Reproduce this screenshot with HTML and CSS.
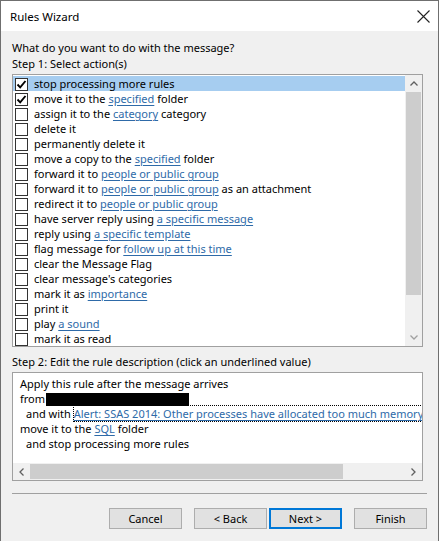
FILE: index.html
```html
<!DOCTYPE html>
<html lang="en">
  <head>
    <meta charset="UTF-8" />
    <title>Rules Wizard</title>
    <link rel="stylesheet" href="styles.css">
  </head>
  <body>
    <div class="window">
      <div class="titlebar">
        <span class="title">Rules Wizard</span>
        <svg class="close" width="13" height="13" viewBox="0 0 13 13">
          <path d="M0.5 0.5 L12.5 12.5 M12.5 0.5 L0.5 12.5" stroke="#222" stroke-width="1.1" fill="none" />
        </svg>
      </div>

      <div class="content">
        <p class="label">What do you want to do with the message?</p>
        <p class="label">Step 1: Select action(s)</p>

        <div class="action-list">
          <ul class="rows">
            <li class="selected"><span class="check on"></span>stop processing more rules</li>
            <li><span class="check on"></span>move it to the <a>specified</a> folder</li>
            <li><span class="check"></span>assign it to the <a>category</a> category</li>
            <li><span class="check"></span>delete it</li>
            <li><span class="check"></span>permanently delete it</li>
            <li><span class="check"></span>move a copy to the <a>specified</a> folder</li>
            <li><span class="check"></span>forward it to <a>people or public group</a></li>
            <li><span class="check"></span>forward it to <a>people or public group</a> as an attachment</li>
            <li><span class="check"></span>redirect it to <a>people or public group</a></li>
            <li><span class="check"></span>have server reply using <a>a specific message</a></li>
            <li><span class="check"></span>reply using <a>a specific template</a></li>
            <li><span class="check"></span>flag message for <a>follow up at this time</a></li>
            <li><span class="check"></span>clear the Message Flag</li>
            <li><span class="check"></span>clear message's categories</li>
            <li><span class="check"></span>mark it as <a>importance</a></li>
            <li><span class="check"></span>print it</li>
            <li><span class="check"></span>play <a>a sound</a></li>
            <li><span class="check"></span>mark it as read</li>
          </ul>
          <div class="vscroll">
            <div class="arrow">
              <svg width="8" height="5" viewBox="0 0 8 5"><path d="M0.5 4.5 L4 1 L7.5 4.5" stroke="#606060" stroke-width="1.3" fill="none" /></svg>
            </div>
            <div class="vthumb"></div>
            <div class="vtrack"></div>
            <div class="arrow">
              <svg width="8" height="5" viewBox="0 0 8 5"><path d="M0.5 0.5 L4 4 L7.5 0.5" stroke="#a0a0a0" stroke-width="1.3" fill="none" /></svg>
            </div>
          </div>
        </div>

        <p class="label step2">Step 2: Edit the rule description (click an underlined value)</p>

        <div class="desc-box">
          <div class="desc-text">
            <div>Apply this rule after the message arrives</div>
            <div>from<span class="redacted"></span></div>
            <div class="indent">and with <a class="focused">Alert: SSAS 2014: Other processes have allocated too much memory</a></div>
            <div>move it to the <a>SQL</a> folder</div>
            <div class="indent">and stop processing more rules</div>
          </div>
          <div class="hscroll">
            <div class="harrow">
              <svg width="5" height="8" viewBox="0 0 5 8"><path d="M4.5 0.5 L1 4 L4.5 7.5" stroke="#606060" stroke-width="1.3" fill="none" /></svg>
            </div>
            <div class="hthumb"></div>
            <div class="htrack"></div>
            <div class="harrow">
              <svg width="5" height="8" viewBox="0 0 5 8"><path d="M0.5 0.5 L4 4 L0.5 7.5" stroke="#606060" stroke-width="1.3" fill="none" /></svg>
            </div>
          </div>
        </div>

        <div class="separator"></div>

        <div class="buttons">
          <button class="cancel">Cancel</button>
          <button class="back">&lt; Back</button>
          <button class="next">Next &gt;</button>
          <button class="finish">Finish</button>
        </div>
      </div>
    </div>
  </body>
</html>
```

FILE: styles.css
```css
* {
  margin: 0;
  padding: 0;
  box-sizing: border-box;
}

body {
  font-family: "Noto Sans", "Open Sans", sans-serif;
  font-size: 11px;
  color: #000;
  background: #f0f0f0;
}

.window {
  width: 439px;
  height: 541px;
  border: 1px solid #6f6f6f;
  border-bottom: none;
  background: #f0f0f0;
  overflow: hidden;
}

.titlebar {
  height: 30px;
  background: white;
  display: flex;
  justify-content: space-between;
  align-items: center;
  padding: 0 8px 0 9px;
}

.title {
  font-size: 11.5px;
}

.close {
  margin-top: 1px;
}

.content {
  padding: 9px 0 0 11px;
}

.label {
  line-height: 16px;
  white-space: nowrap;
}

.action-list {
  margin-top: 2px;
  width: 411px;
  height: 273px;
  border: 1px solid #a0a0a0;
  background: white;
  display: flex;
}

.rows {
  list-style-type: none;
  flex: 1;
  padding-top: 1px;
}

.rows li {
  height: 15px;
  line-height: 15px;
  padding-left: 2px;
  white-space: nowrap;
}

.rows li.selected {
  background: #a6cdf0;
}

.check {
  display: inline-block;
  width: 13px;
  height: 13px;
  border: 1px solid #333;
  background: white;
  margin-right: 6px;
  vertical-align: -3px;
}

.check.on {
  background: white url("data:image/svg+xml;utf8,<svg xmlns='http://www.w3.org/2000/svg' width='11' height='11' viewBox='0 0 11 11'><path d='M1.5 5.5 L4.2 8.3 L9.5 2' stroke='black' stroke-width='1.9' fill='none'/></svg>") no-repeat center;
}

a {
  color: #2e6aa8;
  text-decoration: underline;
  text-underline-offset: 2px;
}

.vscroll {
  width: 17px;
  display: flex;
  flex-direction: column;
  background: #f0f0f0;
}

.arrow {
  height: 17px;
  display: flex;
  align-items: center;
  justify-content: center;
}

.vthumb {
  height: 203px;
  margin: 0 1px;
  background: #cdcdcd;
}

.vtrack {
  flex: 1;
}

.step2 {
  margin-top: 7px;
}

.desc-box {
  margin-top: 2px;
  width: 411px;
  height: 109px;
  border: 1px solid #a0a0a0;
  background: white;
  display: flex;
  flex-direction: column;
}

.desc-text {
  flex: 1;
  padding: 3px 0 0 7px;
  white-space: nowrap;
  overflow: hidden;
}

.desc-text div {
  height: 15px;
  line-height: 15px;
}

.desc-text .indent {
  padding-left: 6px;
}

.redacted {
  display: inline-block;
  width: 143px;
  height: 13px;
  background: black;
  vertical-align: -3px;
  margin-left: 1px;
}

.focused {
  outline: 1px dotted #000;
  outline-offset: 0;
  padding-right: 1px;
}

.hscroll {
  height: 17px;
  display: flex;
  background: #f0f0f0;
}

.harrow {
  width: 17px;
  display: flex;
  align-items: center;
  justify-content: center;
}

.hthumb {
  width: 313px;
  margin: 1px 0;
  background: #cdcdcd;
}

.htrack {
  flex: 1;
}

.separator {
  margin-top: 12px;
  width: 415px;
  height: 1px;
  background: #a0a0a0;
}

.buttons {
  margin-top: 14px;
  display: flex;
  padding-left: 97px;
}

.buttons button {
  width: 73px;
  height: 21px;
  font-family: "Noto Sans", "Open Sans", sans-serif;
  font-size: 11px;
  color: #000;
  background: #e1e1e1;
  border: 1px solid #adadad;
}

.buttons .back {
  margin-left: 12px;
}

.buttons .next {
  margin-left: 2px;
  border: 2px solid #0078d7;
}

.buttons .finish {
  margin-left: 12px;
}
```
